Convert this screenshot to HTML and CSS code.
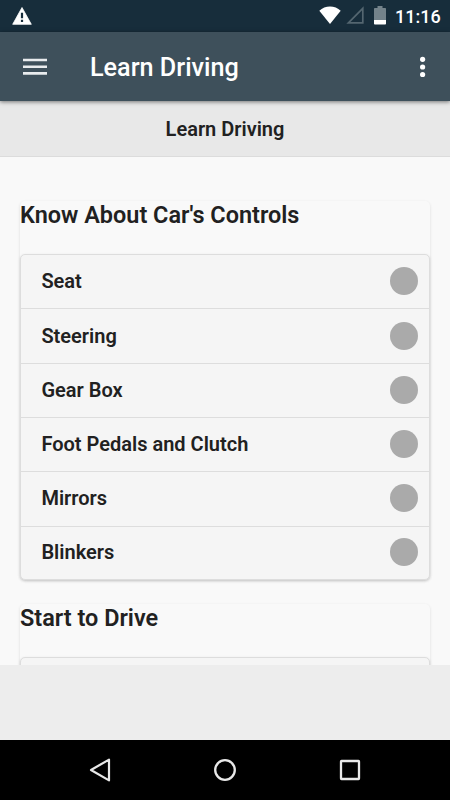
FILE: index.html
```html
<!DOCTYPE html>
<html lang="en">
<head>
    <meta charset="UTF-8">
    <meta content="width=device-width, initial-scale=1.0" name="viewport">
    <title>Learn Driving</title>
    <link rel="stylesheet" href="styles.css">
</head>
<body>
<div class="status-bar">
    <svg class="warning" width="20" height="18" viewBox="0 0 20 18">
        <path d="M10 0.5 L19.3 17.3 H0.7 Z" fill="#fff" stroke="#fff" stroke-width="0.8" stroke-linejoin="round"/>
        <path d="M8.9 5.8h2.2v5.4H8.9zM8.9 12.7h2.2v2.2H8.9z" fill="#172d3b"/>
    </svg>
    <svg class="wifi" width="22" height="18" viewBox="0 0 22 18">
        <path d="M11 18 L0.3 4.7 C6 -1 16 -1 21.7 4.7 Z" fill="#fff"/>
    </svg>
    <svg class="signal" width="18" height="18" viewBox="0 0 18 18">
        <path d="M16.8 2.4 V16.8 H2.4 Z" fill="none" stroke="#546670" stroke-width="1.7"/>
    </svg>
    <svg class="battery" width="12" height="19" viewBox="0 0 12 19">
        <path d="M3.5 0h5v2H11.2q.8 0 .8.8V14H0V2.8Q0 2 .8 2H3.5z" fill="#74838b"/>
        <path d="M0 14h12v3.7q0 .8-.8.8H.8q-.8 0-.8-.8z" fill="#fff"/>
    </svg>
    <span class="time">11:16</span>
</div>
<header class="toolbar">
    <svg class="menu-icon" width="24" height="18" viewBox="0 0 24 18">
        <path d="M0 2h24M0 8.7h24M0 15.4h24" stroke="#e9ecee" stroke-width="2.6"/>
    </svg>
    <h1>Learn Driving</h1>
    <svg class="more-icon" width="6" height="22" viewBox="0 0 6 22">
        <g fill="#fff">
            <circle cx="2.6" cy="3.3" r="2.6"/>
            <circle cx="2.6" cy="11" r="2.6"/>
            <circle cx="2.6" cy="18.5" r="2.6"/>
        </g>
    </svg>
</header>
<main class="content">
    <h2 class="page-title">Learn Driving</h2>
    <section class="card">
        <h3>Know About Car's Controls</h3>
        <ul class="lesson-list">
            <li>Seat<span class="mark"></span></li>
            <li>Steering<span class="mark"></span></li>
            <li>Gear Box<span class="mark"></span></li>
            <li>Foot Pedals and Clutch<span class="mark"></span></li>
            <li>Mirrors<span class="mark"></span></li>
            <li>Blinkers<span class="mark"></span></li>
        </ul>
    </section>
    <section class="card">
        <h3>Start to Drive</h3>
        <ul class="lesson-list">
            <li></li>
        </ul>
    </section>
</main>
<div class="ad-space"></div>
<nav class="nav-bar">
    <svg width="24" height="24" viewBox="0 0 24 24">
        <path d="M21 1.6 V22.4 L3 12 Z" fill="none" stroke="#e8e8e8" stroke-width="2.2" stroke-linejoin="round"/>
    </svg>
    <svg width="24" height="24" viewBox="0 0 24 24">
        <circle cx="12" cy="12" r="9.8" fill="none" stroke="#e8e8e8" stroke-width="2.3"/>
    </svg>
    <svg width="24" height="24" viewBox="0 0 24 24">
        <rect x="3" y="3" width="18" height="18" rx="0.5" fill="none" stroke="#e8e8e8" stroke-width="2.3"/>
    </svg>
</nav>
</body>
</html>
```
FILE: styles.css
```css
* {
    box-sizing: border-box;
}
body {
    margin: 0;
    height: 800px;
    display: flex;
    flex-direction: column;
    overflow: hidden;
    font-family: Roboto, sans-serif;
    color: #212121;
    background-color: #ededed;
}
h1, h2, h3, ul {
    margin: 0;
    padding: 0;
}
svg {
    display: block;
    flex: none;
}
.status-bar {
    flex: none;
    height: 32px;
    padding: 0 9px 0 12px;
    display: flex;
    align-items: flex-start;
    background-color: #172d3b;
}
.warning {
    margin-top: 7px;
}
.wifi {
    margin: 6px 5px 0 auto;
}
.signal {
    margin: 6px 10px 0 0;
}
.battery {
    margin: 6px 9px 0 0;
}
.time {
    width: 46px;
    font-size: 18px;
    font-weight: 500;
    line-height: 20px;
    margin-top: 7px;
    color: #fff;
    white-space: nowrap;
}
.toolbar {
    position: relative;
    z-index: 1;
    flex: none;
    height: 69px;
    padding: 0 24px 0 23px;
    display: flex;
    align-items: center;
    color: #fff;
    background-color: #3e505b;
    box-shadow: 0 1px 4px rgba(0,0,0,0.5);
}
.toolbar h1 {
    flex: 1;
    margin-left: 43px;
    font-size: 25.2px;
    font-weight: 500;
    line-height: 30px;
    padding-top: 2px;
}
.content {
    flex: none;
    height: 564px;
    overflow: hidden;
    background-color: #f9f9f9;
}
.page-title {
    height: 56px;
    margin-bottom: 44px;
    border-bottom: 1px solid #dcdcdc;
    font-size: 20px;
    font-weight: 600;
    line-height: 56px;
    text-align: center;
    background-color: #e8e8e8;
}
.card {
    margin: 0 20px 24.5px;
    border-radius: 5px;
    box-shadow: 0 1px 3px rgba(0,0,0,0.12);
}
.card h3 {
    height: 53.1px;
    font-size: 23.45px;
    font-weight: 600;
    line-height: 29px;
}
.lesson-list {
    list-style: none;
    border: 1px solid #dddddd;
    border-radius: 5px;
    background-color: #f5f5f5;
    box-shadow: 0 1px 3px rgba(0,0,0,0.12);
}
.lesson-list li {
    height: 54.3px;
    padding: 0 11.3px 1px 20.4px;
    display: flex;
    align-items: center;
    justify-content: space-between;
    border-top: 1px solid #dddddd;
    font-size: 20px;
    font-weight: 600;
}
.lesson-list li:first-child {
    height: 53.3px;
    border-top: none;
}
.lesson-list li:last-child {
    height: 53.3px;
}
.mark {
    width: 28px;
    height: 28px;
    border-radius: 50%;
    background-color: #aaaaaa;
}
.ad-space {
    flex: 1;
}
.nav-bar {
    flex: none;
    height: 60px;
    padding: 0 88px;
    display: flex;
    align-items: center;
    justify-content: space-between;
    background-color: #000;
}
```
